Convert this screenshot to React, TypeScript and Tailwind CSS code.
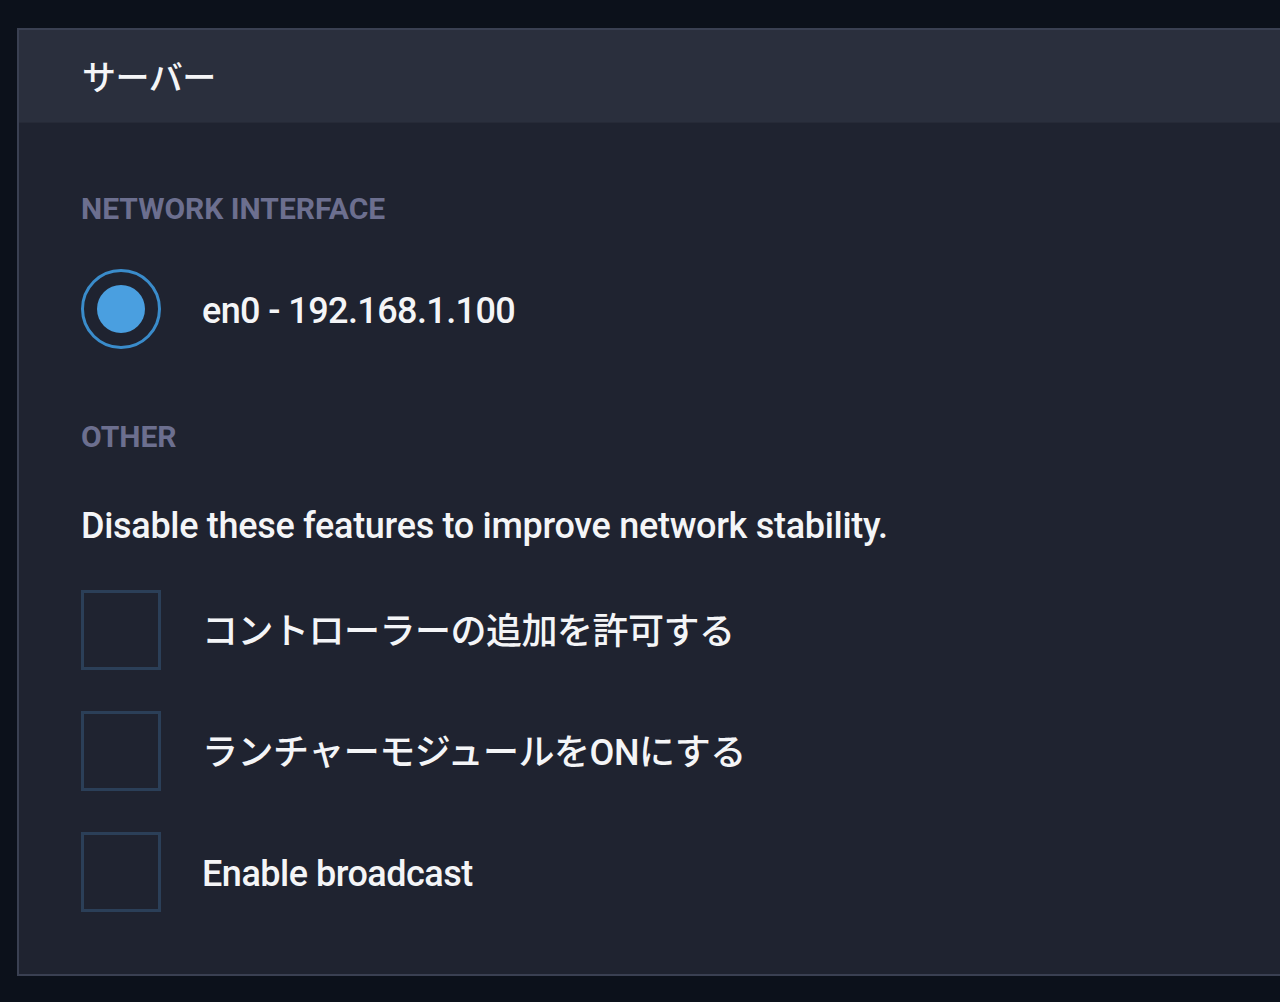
import { useState } from 'react'

const font = { fontFamily: 'Roboto, "Noto Sans CJK JP", sans-serif' }

function SectionLabel({ children }: { children: string }) {
  return (
    <div className="flex h-[40px] items-center pt-[2px] text-[30px] font-bold text-[#6c6f8f]">
      {children}
    </div>
  )
}

function CheckRow({ label, checked, onToggle }: { label: string; checked: boolean; onToggle: () => void }) {
  return (
    <button onClick={onToggle} className="flex h-[80px] items-center text-left">
      <span className="flex h-[80px] w-[80px] shrink-0 items-center justify-center border-[3px] border-[#2b3f58]">
        {checked && <span className="h-[40px] w-[40px] bg-[#4a9fe0]" />}
      </span>
      <span className="ml-[41px] pt-[4px] text-[36px] font-medium tracking-[-0.5px] text-[#f4f5f7]">{label}</span>
    </button>
  )
}

export default function App() {
  const [checks, setChecks] = useState([false, false, false])

  const toggle = (i: number) => {
    setChecks((prev) => prev.map((c, idx) => (idx === i ? !c : c)))
  }

  const labels = ['コントローラーの追加を許可する', 'ランチャーモジュールをONにする', 'Enable broadcast']

  return (
    <div className="h-[1002px] w-[1280px] overflow-hidden bg-[#0c111b] pl-[17px] pt-[28px]" style={font}>
      <div className="h-[948px] w-[1300px] border-2 border-[#3a4052] bg-[#1f2330]">
        <div className="flex h-[93px] items-center border-b border-[#262a37] bg-[#2a2f3d] pl-[63px] pt-[4px] text-[34px] font-medium tracking-[-0.5px] text-[#f4f5f7]">
          サーバー
        </div>

        <div className="pl-[62px] pt-[64px]">
          <SectionLabel>NETWORK INTERFACE</SectionLabel>

          <div className="mt-[42px] flex h-[80px] items-center">
            <span className="flex h-[80px] w-[80px] items-center justify-center rounded-full border-[3px] border-[#3a8ccb]">
              <span className="h-[48px] w-[48px] rounded-full bg-[#4a9fe0]" />
            </span>
            <span className="ml-[41px] pt-[4px] text-[36px] font-medium tracking-[-0.6px] text-[#f4f5f7]">en0 - 192.168.1.100</span>
          </div>

          <div className="mt-[66px]">
            <SectionLabel>OTHER</SectionLabel>
          </div>

          <div className="mt-[49px] flex h-[40px] items-center pt-[4px] text-[36px] font-medium tracking-[-0.3px] text-[#f4f5f7]">
            Disable these features to improve network stability.
          </div>

          <div className="mt-[46px] flex flex-col gap-[41px]">
            {labels.map((l, i) => (
              <CheckRow key={l} label={l} checked={checks[i]} onToggle={() => toggle(i)} />
            ))}
          </div>
        </div>
      </div>
    </div>
  )
}
